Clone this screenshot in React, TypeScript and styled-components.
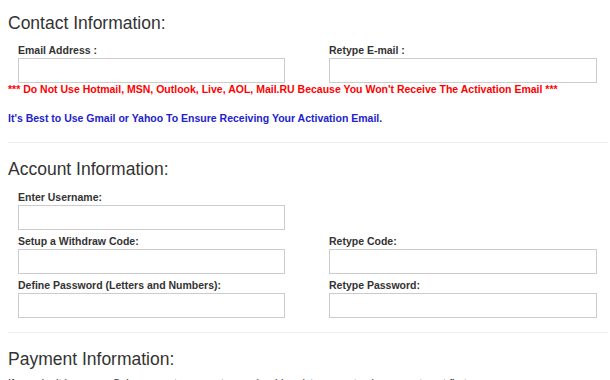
import React from "react";
import styled, { createGlobalStyle } from "styled-components";

const GlobalStyle = createGlobalStyle`
  html, body {
    margin: 0;
    padding: 0;
    background: #fff;
  }
  body {
    font-family: "Liberation Sans", Arial, Helvetica, sans-serif;
    color: #333;
  }
`;

const Page = styled.div`
  width: 610px;
  height: 380px;
  overflow: hidden;
  box-sizing: border-box;
  padding: 13px 2px 0 8px;
`;

const Section = styled.section`
  display: flex;
  flex-flow: column;
`;

const Heading = styled.h2`
  margin: 0;
  font-size: 17.5px;
  line-height: 20px;
  font-weight: normal;
  color: #333;
`;

const Divider = styled.hr<{ $top: number }>`
  margin: ${(p) => p.$top}px 0 16px;
  border: none;
  border-top: 1px solid #eee;
  height: 0;
`;

const FieldGrid = styled.div<{ $top: number }>`
  display: grid;
  grid-template-columns: 267px 268px;
  column-gap: 44px;
  row-gap: 4px;
  padding-left: 10px;
  margin-top: ${(p) => p.$top}px;
`;

const Field = styled.div<{ $col?: number }>`
  display: flex;
  flex-flow: column;
  grid-column: ${(p) => p.$col ?? "auto"};
`;

const Label = styled.label`
  font-size: 10.5px;
  line-height: 14px;
  font-weight: bold;
  color: #333;
  margin-bottom: 1px;
`;

const Input = styled.input`
  box-sizing: border-box;
  width: 100%;
  height: 25px;
  border: 1px solid #ccc;
  background: #fff;
  padding: 0 6px;
  margin: 0;
  font-family: inherit;
  font-size: 12px;
  outline: none;
`;

const Note = styled.p<{ $color: string; $gap: number }>`
  margin: ${(p) => p.$gap}px 0 0;
  font-size: 10.5px;
  line-height: 13px;
  font-weight: bold;
  color: ${(p) => p.$color};
  white-space: nowrap;
`;

const Text = styled.p`
  margin: 8px 0 0;
  font-size: 11px;
  line-height: 13px;
  color: #333;
  white-space: nowrap;
`;

const App = () => {
  return (
    <>
      <GlobalStyle />
      <Page>
        <Section>
          <Heading>Contact Information:</Heading>
          <FieldGrid $top={10}>
            <Field>
              <Label>Email Address :</Label>
              <Input type="text" />
            </Field>
            <Field>
              <Label>Retype E-mail :</Label>
              <Input type="text" />
            </Field>
          </FieldGrid>
          <Note $color="#ff0000" $gap={0}>
            *** Do Not Use Hotmail, MSN, Outlook, Live, AOL, Mail.RU Because You Won't Receive The Activation Email ***
          </Note>
          <Note $color="#2222cc" $gap={16}>
            It's Best to Use Gmail or Yahoo To Ensure Receiving Your Activation Email.
          </Note>
        </Section>
        <Divider $top={17} />
        <Section>
          <Heading>Account Information:</Heading>
          <FieldGrid $top={11}>
            <Field $col={1}>
              <Label>Enter Username:</Label>
              <Input type="text" />
            </Field>
            <Field $col={1}>
              <Label>Setup a Withdraw Code:</Label>
              <Input type="text" />
            </Field>
            <Field $col={2}>
              <Label>Retype Code:</Label>
              <Input type="text" />
            </Field>
            <Field $col={1}>
              <Label>Define Password (Letters and Numbers):</Label>
              <Input type="password" />
            </Field>
            <Field $col={2}>
              <Label>Retype Password:</Label>
              <Input type="password" />
            </Field>
          </FieldGrid>
        </Section>
        <Divider $top={14} />
        <Section>
          <Heading>Payment Information:</Heading>
          <Text>
            If you don't have any Coinpayments account, you should register one at coinpayments.net first.
          </Text>
        </Section>
      </Page>
    </>
  );
};

export default App;
